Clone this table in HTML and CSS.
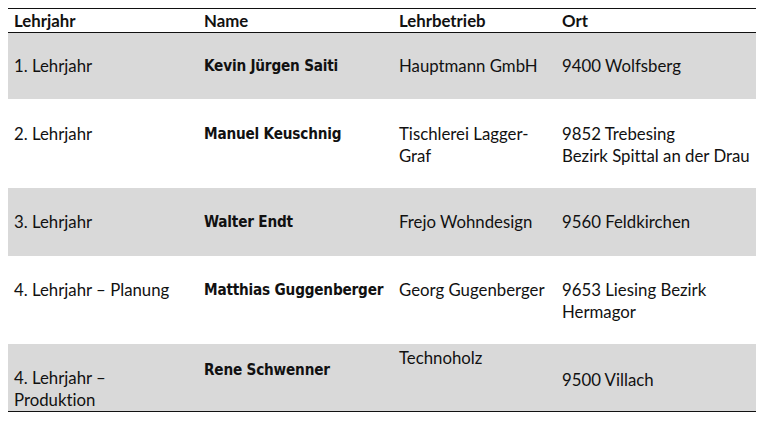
FILE: index.html
```html
<!DOCTYPE html>
<html lang="de">
<head>
<meta charset="utf-8">
<title>Lehrlinge</title>
<link rel="stylesheet" href="styles.css">
</head>
<body>
<table class="tbl">
  <colgroup>
    <col class="c1"><col class="c2"><col class="c3"><col class="c4">
  </colgroup>
  <thead>
    <tr class="head">
      <th>Lehrjahr</th><th>Name</th><th>Lehrbetrieb</th><th>Ort</th>
    </tr>
  </thead>
  <tbody>
    <tr class="r1 grey">
      <td>1. Lehrjahr</td>
      <td class="name">Kevin Jürgen Saiti</td>
      <td>Hauptmann GmbH</td>
      <td>9400 Wolfsberg</td>
    </tr>
    <tr class="r2">
      <td>2. Lehrjahr</td>
      <td class="name">Manuel Keuschnig</td>
      <td>Tischlerei Lagger-<br>Graf</td>
      <td>9852 Trebesing<br>Bezirk Spittal an der Drau</td>
    </tr>
    <tr class="r3 grey">
      <td>3. Lehrjahr</td>
      <td class="name">Walter Endt</td>
      <td>Frejo Wohndesign</td>
      <td>9560 Feldkirchen</td>
    </tr>
    <tr class="r4">
      <td>4. Lehrjahr – Planung</td>
      <td class="name">Matthias Guggenberger</td>
      <td>Georg Gugenberger</td>
      <td>9653 Liesing Bezirk<br>Hermagor</td>
    </tr>
    <tr class="r5 grey">
      <td class="bottom">4. Lehrjahr –<br>Produktion</td>
      <td class="name p-name">Rene Schwenner</td>
      <td class="p-firm">Technoholz</td>
      <td class="p-ort">9500 Villach</td>
    </tr>
  </tbody>
</table>
</body>
</html>
```
FILE: styles.css
```css
html, body {
  margin: 0;
  padding: 0;
  background: #ffffff;
}
body {
  padding: 8px 8px 0 8px;
  font-family: "Lato", "Liberation Sans", sans-serif;
  font-size: 16.8px;
  font-variant-ligatures: none;
  color: #111111;
}
.tbl {
  border-collapse: collapse;
  width: 748px;
  table-layout: fixed;
  border-top: 1px solid #111;
  border-bottom: 1px solid #111;
}
.c1 { width: 190px; }
.c2 { width: 195px; }
.c3 { width: 163px; }
.c4 { width: 200px; }
th, td {
  padding: 0 0 0 6px;
  text-align: left;
  line-height: 22px;
  white-space: nowrap;
}
.head th {
  height: 23px;
  font-weight: 700;
  vertical-align: middle;
  border-bottom: 1px solid #111;
}
.grey td { background: #d9d9d9; }
.name {
  font-family: "DejaVu Sans Condensed", "DejaVu Sans", sans-serif;
  font-weight: 700;
  font-size: 15.2px;
  letter-spacing: -0.2px;
}
.r1 td { height: 66px; vertical-align: middle; padding-top: 1px; box-sizing: border-box; }
.r2 td { height: 89px; vertical-align: top; padding-top: 24px; box-sizing: border-box; }
.r3 td { height: 68px; vertical-align: middle; padding-top: 1px; box-sizing: border-box; }
.r4 td { height: 88px; vertical-align: top; padding-top: 23px; box-sizing: border-box; }
.r5 td { height: 68px; vertical-align: top; box-sizing: border-box; }
.r5 td.bottom { vertical-align: bottom; padding-bottom: 0; }
.r5 td.p-name { padding-top: 15px; }
.r5 td.p-firm { padding-top: 3px; }
.r5 td.p-ort { padding-top: 25px; }
```
